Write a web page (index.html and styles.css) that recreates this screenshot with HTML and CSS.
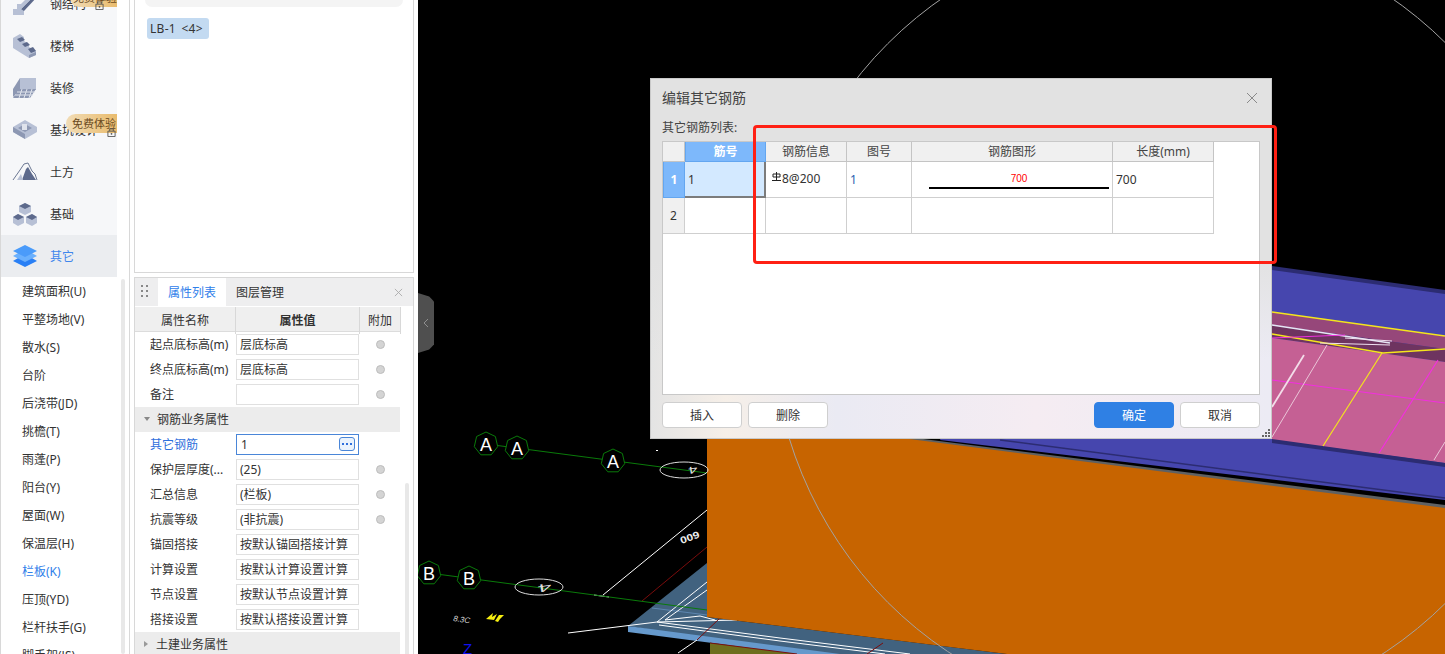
FILE: index.html
```html
<!DOCTYPE html>
<html lang="zh-CN">
<head>
<meta charset="utf-8">
<title>编辑其它钢筋</title>
<link rel="stylesheet" href="styles.css">
</head>
<body>
<div class="app">
  <aside class="sidebar">
    <div class="side-inner">
      <nav class="cats">
        <a class="cat">
          <svg class="cat-icon" viewBox="0 0 26 24"><polygon class="l" points="1,17 12,17 12,23 1,23"/><polygon class="l" points="5,12 9,12 9,18 5,18"/><polygon class="d" points="9,17 25,1 25,5 12,19"/><polygon class="l" points="9,12 20,1 25,1 9,17"/></svg>
          <span>钢结构</span>
          <em class="badge badge-top">免费体验</em>
          <svg class="lock lock-top" viewBox="0 0 10 10"><path d="M1 3.500h8v6H1zM3 3.500V1h4v2.500" fill="none" stroke="#555" stroke-width="1"/><circle cx="5" cy="6.500" r="1" fill="#555"/></svg>
        </a>
        <a class="cat">
          <svg class="cat-icon" viewBox="0 0 26 24"><polygon class="l" points="1,4 8,0 12,3 12,7 17,10 17,13 24,17 24,21 17,24 1,14"/><polygon class="d" points="5,5 10,3 13,6 8,8"/><polygon class="d" points="10,10 15,8 18,11 13,13"/><polygon class="d" points="16,15 21,13 24,17 19,19"/><polygon class="m" points="17,21 24,18 24,21 17,24"/></svg>
          <span>楼梯</span>
        </a>
        <a class="cat">
          <svg class="cat-icon" viewBox="0 0 26 24"><polygon class="l" points="8,2 24,2 24,14 8,14"/><polygon class="m" points="8,2 8,14 1,21 1,13"/><polygon class="m" points="7,13 24,13 18,22 1,22"/><path class="g" d="M5 16h18M3 19h18M10 13l-3 9M15 13l-3 9M20 13l-3 9"/></svg>
          <span>装修</span>
        </a>
        <a class="cat">
          <svg class="cat-icon" viewBox="0 0 26 24"><polygon class="l" points="13,2 25,9 25,14 13,21 1,14 1,9"/><polygon class="m" points="13,6 20,10 13,14 6,10"/><rect class="w" x="10" y="6" width="5" height="6"/><polygon class="m" points="1,9 13,16 13,21 1,14"/></svg>
          <span>基坑设计</span>
          <em class="badge">免费体验</em>
          <svg class="lock" viewBox="0 0 10 10"><path d="M1 3.500h8v6H1zM3 3.500V1h4v2.500" fill="none" stroke="#555" stroke-width="1"/><circle cx="5" cy="6.500" r="1" fill="#555"/></svg>
        </a>
        <a class="cat">
          <svg class="cat-icon" viewBox="0 0 26 24"><path d="M1 20 8 10l4-6 4-1 4 8 3 3 2 6" fill="none" stroke="#6c7893" stroke-width="1"/><polygon class="d" points="10,20 14,9 16,7 20,14 24,20"/><polygon class="l" points="5,20 9,14 11,20"/></svg>
          <span>土方</span>
        </a>
        <a class="cat">
          <svg class="cat-icon" viewBox="0 0 26 24"><polygon class="l" points="13,1 19,4 19,10 13,13 7,10 7,4"/><polygon class="d" points="7,4 13,1 19,4 13,7"/><polygon class="l" points="6,12 12,15 12,21 6,24 1,21 1,15"/><polygon class="d" points="1,15 6,12 12,15 6,18"/><polygon class="l" points="20,12 25,15 25,21 20,24 14,21 14,15"/><polygon class="d" points="14,15 20,12 25,15 20,18"/></svg>
          <span>基础</span>
        </a>
        <a class="cat is-active">
          <svg class="cat-icon" viewBox="0 0 26 24"><polygon fill="#2a80f5" points="13,10 25,17 13,23 1,17"/><polygon fill="#6ab0fd" points="13,5 25,12 13,18 1,12"/><polygon fill="#4a9bfa" points="13,1 25,7 13,13 1,7"/></svg>
          <span>其它</span>
        </a>
      </nav>
      <ul class="subs">
        <li>建筑面积(U)</li>
        <li>平整场地(V)</li>
        <li>散水(S)</li>
        <li>台阶</li>
        <li>后浇带(JD)</li>
        <li>挑檐(T)</li>
        <li>雨蓬(P)</li>
        <li>阳台(Y)</li>
        <li>屋面(W)</li>
        <li>保温层(H)</li>
        <li class="is-active">栏板(K)</li>
        <li>压顶(YD)</li>
        <li>栏杆扶手(G)</li>
        <li>脚手架(JS)</li>
      </ul>
    </div>
    <div class="side-track"><i class="side-thumb"></i></div>
  </aside>

  <section class="panels">
    <div class="list-panel">
      <div class="search-stub"></div>
      <span class="tag">LB-1 &lt;4&gt;</span>
    </div>
    <div class="prop-panel">
      <div class="tabs">
        <svg class="grip" viewBox="0 0 8 14"><g fill="#888"><rect width="2" height="2"/><rect x="5" width="2" height="2"/><rect y="5" width="2" height="2"/><rect x="5" y="5" width="2" height="2"/><rect y="10" width="2" height="2"/><rect x="5" y="10" width="2" height="2"/></g></svg>
        <span class="tab is-active">属性列表</span>
        <span class="tab">图层管理</span>
        <svg class="tab-close" viewBox="0 0 10 10"><path d="M1 1l8 8M9 1l-8 8" stroke="#aaa" stroke-width="1" fill="none"/></svg>
      </div>
      <div class="prop-head">
        <span>属性名称</span><span class="strong">属性值</span><span>附加</span>
      </div>
      <div class="prop-row"><label>起点底标高(m)</label><div class="val">层底标高</div><i class="dot"></i></div>
      <div class="prop-row"><label>终点底标高(m)</label><div class="val">层底标高</div><i class="dot"></i></div>
      <div class="prop-row"><label>备注</label><div class="val"></div><i class="dot"></i></div>
      <div class="prop-section"><i class="tri tri-down"></i>钢筋业务属性</div>
      <div class="prop-row is-active"><label>其它钢筋</label><div class="val">1<b class="more"><i></i><i></i><i></i></b></div></div>
      <div class="prop-row"><label>保护层厚度(...</label><div class="val">(25)</div><i class="dot"></i></div>
      <div class="prop-row"><label>汇总信息</label><div class="val">(栏板)</div><i class="dot"></i></div>
      <div class="prop-row"><label>抗震等级</label><div class="val">(非抗震)</div><i class="dot"></i></div>
      <div class="prop-row"><label>锚固搭接</label><div class="val">按默认锚固搭接计算</div></div>
      <div class="prop-row"><label>计算设置</label><div class="val">按默认计算设置计算</div></div>
      <div class="prop-row"><label>节点设置</label><div class="val">按默认节点设置计算</div></div>
      <div class="prop-row"><label>搭接设置</label><div class="val">按默认搭接设置计算</div></div>
      <div class="prop-section"><i class="tri tri-right"></i>土建业务属性</div>
      <i class="prop-scroll"></i>
    </div>
  </section>

  <main class="scene">
    <svg class="cad" viewBox="418 0 1027 654">
      <defs>
        <polygon id="hept" points="0,-12 9.4,-7.500 11.700,2.700 5.200,10.800 -5.200,10.800 -11.700,2.700 -9.400,-7.500" fill="#000" stroke="#0a7a0a" stroke-width="1"/>
      </defs>
      <!-- slab and beams -->
      <polygon fill="#4646ae" points="1272,268 1445,292 1445,500 940,440 1000,300"/>
      <polygon fill="#2c2c72" points="1272,266 1445,290 1445,294 1272,270"/>
      <polygon fill="#96477a" points="1272,312 1445,336 1445,349 1272,325"/>
      <polygon fill="#6e3460" points="1272,325 1445,349 1445,362 1272,338"/>
      <polygon fill="#c56094" points="1272,338 1445,362 1445,463 1272,440"/>
      <polygon fill="#2c2c72" points="1272,439 1445,463 1445,467 1272,443"/>
      <path d="M1000 440 1445 498" stroke="#2c2c72" stroke-width="1.500" fill="none"/>
      <polygon fill="#5e6163" points="860,431 1445,505 1445,510 860,437"/>
      <g fill="none" stroke-width="1">
        <path d="M1272 312 1445 336" stroke="#f4e51c" stroke-width="1.500"/>
        <path d="M1272 325 1390 343" stroke="#e6e6f5" stroke-width="1.500"/>
        <path d="M1272 334 1383 353 1445 349" stroke="#f4e51c" stroke-width="1.500"/>
        <path d="M1272 338 1345 335" stroke="#f030e0"/>
        <path d="M1345 338 1392 341M1320 343 1390 345" stroke="#f0e0f0"/>
        <path d="M1272 380 1445 403" stroke="#f22fe0" stroke-width="1.200"/>
        <path d="M1272 407 1304 355" stroke="#f3dde9" stroke-width="1.800"/>
        <path d="M1272 437 1327 345" stroke="#eac6d8"/>
        <path d="M1323 446 1382 353" stroke="#f4e51c" stroke-width="1.200"/>
        <path d="M1379 453 1438 360" stroke="#f22fe0" stroke-width="1.200"/>
        <path d="M1434 460 1445 442" stroke="#eac6d8"/>
      </g>
      <!-- platform -->
      <polygon fill="#6e6e1e" points="710,643 820,654 710,654"/>
      <polygon fill="#41627f" points="628,626 707,563 707,617 1007,654 797,654"/>
      <polygon fill="#6699cc" points="628,626 840,654 797,654 628,632"/>
      <path d="M710 643 797 654" stroke="#7a1010" stroke-width="1" fill="none"/>
      <path d="M652 608 707 615" stroke="#5d86b0" stroke-width="1" fill="none"/>
      <g fill="none" stroke="#fff" stroke-width="1">
        <path d="M568 633 657 622"/>
        <path d="M707 582 657 622M707 590 665 620"/>
        <path d="M657 622 737 620M665 620 700 616 715 620"/>
        <path d="M657 622 780 638 910 654M659 625 780 641 885 654"/>
        <path d="M678 653 697 640"/>
        <path d="M603 595 707 510"/>
        <path d="M594 595 609 597"/>
      </g>
      <g fill="none" stroke="#7a0c0c" stroke-width="1">
        <path d="M642 601 707 547"/>
        <path d="M697 640 720 618"/>
        <path d="M867 654 883 643"/>
      </g>
      <!-- orange wall -->
      <polygon fill="#c76400" points="707,413 1445,508 1445,654 1007,654 950,647 707,617"/>
      <!-- axes -->
      <g fill="none" stroke="#0a7a0a" stroke-width="1">
        <path d="M486 444 707 473"/>
        <path d="M429 573 707 610"/>
      </g>
      <use href="#hept" x="486" y="444"/>
      <use href="#hept" x="517" y="448"/>
      <use href="#hept" x="613" y="461"/>
      <use href="#hept" x="429" y="573"/>
      <use href="#hept" x="469" y="578"/>
      <g class="axis-label">
        <text x="486" y="451">A</text>
        <text x="517" y="455">A</text>
        <text x="613" y="468">A</text>
        <text x="429" y="580">B</text>
        <text x="469" y="585">B</text>
      </g>
      <ellipse cx="684" cy="470" rx="24" ry="8" fill="none" stroke="#ddd"/>
      <ellipse cx="539" cy="587" rx="24" ry="8" fill="none" stroke="#ddd"/>
      <text class="skew-num" transform="translate(697 466) rotate(172) scale(1.200 .7)">4</text>
      <text class="skew-num" transform="translate(551 583) rotate(172) scale(1.800 .8)">4</text>
      <text class="dim" transform="translate(698 531) rotate(160) scale(1 .8)">600</text>
      <text class="mini" transform="translate(453 621) rotate(8)">8.3C</text>
      <polygon fill="#f6ee10" points="486,619 493,613 492,617 497,614 494,620"/>
      <polygon fill="#f6ee10" points="495,621 499,615 504,615 500,619 498,622"/>
      <text class="z-label" x="463" y="654">Z</text>
      <rect x="656" y="450" width="2" height="1" fill="#fff"/>
      <!-- view circle -->
      <circle cx="1167" cy="323" r="395" fill="none" stroke="#a3a3a3" stroke-width="1"/>
    </svg>

    <button class="collapse" type="button">
      <svg viewBox="0 0 6 10"><path d="M5 1 1 5l4 4" fill="none" stroke="#8f8f8f" stroke-width="1"/></svg>
    </button>

    <div class="dialog">
      <header class="dialog-head">
        <h1>编辑其它钢筋</h1>
        <svg class="dialog-close" viewBox="0 0 12 12"><path d="M1 1l10 10M11 1 1 11" stroke="#8a8a8a" stroke-width="1" fill="none"/></svg>
      </header>
      <p class="dialog-label">其它钢筋列表:</p>
      <div class="grid-box">
        <table class="rebar">
          <colgroup><col class="c0"><col class="c1"><col class="c2"><col class="c3"><col class="c4"><col class="c5"></colgroup>
          <thead>
            <tr><th></th><th class="sel-head">筋号</th><th>钢筋信息</th><th>图号</th><th>钢筋图形</th><th>长度(mm)</th></tr>
          </thead>
          <tbody>
            <tr>
              <th class="sel-head row-no">1</th>
              <td class="sel-cell">1</td>
              <td class="info"><svg class="rebar-mark" viewBox="0 0 9 9"><path d="M1 2h7v3H1zM4.500 0v8M0 8.500h9" fill="none" stroke="#222" stroke-width="1"/></svg>8@200</td>
              <td class="blue">1</td>
              <td class="shape"><span class="shape-num">700</span><i class="shape-bar"></i></td>
              <td>700</td>
            </tr>
            <tr>
              <th class="row-no plain">2</th><td></td><td></td><td></td><td></td><td></td>
            </tr>
          </tbody>
        </table>
      </div>
      <footer class="dialog-foot">
        <button class="btn" type="button">插入</button>
        <button class="btn" type="button">删除</button>
        <span class="foot-gap"></span>
        <button class="btn btn-primary" type="button">确定</button>
        <button class="btn" type="button">取消</button>
      </footer>
      <svg class="resize" viewBox="0 0 9 9"><g fill="#666"><rect x="7" y="1" width="2" height="2"/><rect x="4" y="4" width="2" height="2"/><rect x="7" y="4" width="2" height="2"/><rect x="1" y="7" width="2" height="2"/><rect x="4" y="7" width="2" height="2"/><rect x="7" y="7" width="2" height="2"/></g></svg>
    </div>
    <div class="annotation"></div>
  </main>
</div>
</body>
</html>
```

FILE: styles.css
```css
* { box-sizing: border-box; }
html, body { margin: 0; height: 100%; overflow: hidden; background: #fff; }
body {
  font-family: "Noto Sans", "Noto Sans CJK SC", sans-serif;
  font-size: 12px;
  color: #333;
}
.app { display: flex; width: 1445px; height: 654px; overflow: hidden; }

/* left category rail */
.sidebar {
  flex: 0 0 130px;
  height: 654px;
  display: flex;
  border-left: 1px solid #d8d8d8;
  border-right: 1px solid #d8d8d8;
  overflow: hidden;
}
.side-inner { flex: 0 0 116px; margin-top: -17px; }
.cats { background: #f6f7f9; }
.cat {
  position: relative;
  display: flex;
  align-items: center;
  height: 42px;
  padding-left: 11px;
  overflow: hidden;
}
.cat span { margin-left: 12px; color: #333; }
.cat.is-active { background: #ebedf0; }
.cat.is-active span { color: #3f86ec; }
.cat-icon { flex: 0 0 26px; width: 26px; height: 24px; }
.cat-icon .l { fill: #b7c0d5; }
.cat-icon .m { fill: #8d98b3; }
.cat-icon .d { fill: #5d6a8c; }
.cat-icon .w { fill: #dfe3ec; }
.cat-icon .g { stroke: #dfe3ec; stroke-width: 1; fill: none; }
.badge {
  position: absolute;
  left: 65px;
  top: 5px;
  width: 52px;
  height: 19px;
  padding-left: 6px;
  border-radius: 10px 0 0 10px;
  background: linear-gradient(90deg, #f1dcb6, #e9bb6c);
  color: #6a4a1e;
  font-size: 11px;
  font-style: normal;
  line-height: 19px;
  white-space: nowrap;
}
.badge-top { left: 69px; width: 48px; padding-left: 3px; }
.lock { position: absolute; left: 106px; top: 19px; width: 9px; height: 9px; }
.lock-top { left: 94px; top: 18px; }
.subs { list-style: none; margin: 1px 0 0; padding: 0; background: #fff; }
.subs li { height: 28px; padding-left: 21px; line-height: 28px; white-space: nowrap; color: #333; }
.subs li.is-active { color: #2f80ea; }
.side-track { flex: 0 0 12px; padding: 279px 0 0 4px; }
.side-thumb { display: block; width: 4px; height: 375px; background: #e8e8e8; border-radius: 2px; }

/* middle panels */
.panels { flex: 0 0 288px; padding: 0 4px; display: flex; flex-direction: column; gap: 4px; }
.list-panel {
  flex: 0 0 273px;
  border: 1px solid #d8d8d8;
  border-top: 0;
  background: #fff;
  padding: 0 10px;
}
.search-stub { height: 7px; background: #f4f4f4; border-radius: 0 0 12px 12px; }
.tag {
  display: inline-block;
  width: 62px;
  margin: 11px 0 0 2px;
  height: 21px;
  padding-left: 3px;
  line-height: 21px;
  background: #c3daf1;
  border-radius: 3px;
  letter-spacing: .3px;
  word-spacing: 2px;
  white-space: nowrap;
}
.prop-panel {
  position: relative;
  flex: 1;
  min-height: 0;
  border: 1px solid #d8d8d8;
  border-bottom: 0;
  overflow: hidden;
}
.tabs { display: flex; align-items: center; height: 28px; background: #eeeeef; position: relative; }
.grip { width: 8px; height: 14px; margin: 0 0 0 6px; }
.tab { height: 28px; line-height: 30px; padding: 0 10px; }
.tab.is-active { background: #fff; color: #2f80ea; margin-left: 9px; width: 68px; }
.tab-close { position: absolute; right: 10px; top: 10px; width: 9px; height: 9px; }
.prop-head {
  display: grid;
  grid-template-columns: 101px 124px 41px;
  width: 266px;
  height: 25px;
  margin-top: 1px;
  background: #efefef;
  border-bottom: 1px solid #dcdcdc;
  line-height: 27px;
  text-align: center;
}
.prop-head span { border-right: 1px solid #d8d8d8; }
.prop-head .strong { font-weight: 700; }
.prop-row {
  display: grid;
  grid-template-columns: 101px 124px 41px;
  align-items: center;
  width: 266px;
  height: 25px;
}
.prop-row label { padding: 0 0 2px 15px; white-space: nowrap; overflow: hidden; }
.val {
  position: relative;
  height: 21px;
  margin-right: 1px;
  padding-left: 3px;
  border: 1px solid #e0e0e0;
  background: #fff;
  line-height: 19px;
  white-space: nowrap;
}
.dot {
  justify-self: center;
  width: 9px;
  height: 9px;
  border-radius: 50%;
  background: #d4d4d4;
  border: 1px solid #bdbdbd;
  margin-left: -1px;
}
.prop-row.is-active label { color: #2f6fdc; }
.prop-row.is-active .val { border-color: #4a86d8; padding-left: 4px; }
.more {
  position: absolute;
  right: 3px;
  top: 2px;
  display: flex;
  align-items: center;
  justify-content: center;
  gap: 2px;
  width: 16px;
  height: 14px;
  border: 1px solid #4a86d8;
  border-radius: 3px;
  background: #eaf3fd;
}
.more i { width: 2px; height: 2px; background: #2f6fdc; }
.prop-section {
  display: flex;
  align-items: center;
  width: 265px;
  height: 25px;
  background: #ececec;
  padding: 0 0 2px 9px;
}
.tri { width: 0; height: 0; margin-right: 7px; border-style: solid; border-color: transparent; }
.tri-down { border-width: 4px 3px 0; border-top-color: #888; }
.tri-right { border-width: 3px 0 3px 4px; border-left-color: #999; margin-right: 8px; }
.prop-scroll {
  position: absolute;
  left: 270px;
  top: 205px;
  width: 4px;
  height: 180px;
  background: #e8e8e8;
  border-radius: 2px;
}

/* CAD scene */
.scene { position: relative; flex: 1; height: 654px; background: #000; overflow: hidden; }
.cad { position: absolute; left: 0; top: 0; width: 1027px; height: 654px; }
.axis-label text { font-family: "Liberation Sans", sans-serif; font-size: 18px; fill: #fff; text-anchor: middle; }
.skew-num { font-family: "Liberation Sans", sans-serif; font-size: 14px; fill: #ddd; }
.dim { font-family: "Liberation Sans", sans-serif; font-size: 12px; font-weight: 700; fill: #eee; }
.mini { font-family: "Liberation Sans", sans-serif; font-size: 8px; font-style: italic; fill: #ddd; }
.z-label { font-family: "Liberation Sans", sans-serif; font-size: 15px; fill: #1010f0; }
.collapse {
  position: absolute;
  left: 0;
  top: 293px;
  width: 16px;
  height: 60px;
  padding: 0;
  border: 0;
  background: #4f4f4f;
  border-radius: 0 6px 6px 0;
  clip-path: polygon(0 0, 70% 6%, 100% 14%, 100% 86%, 70% 94%, 0 100%);
  display: flex;
  align-items: center;
  justify-content: center;
}
.collapse svg { width: 6px; height: 10px; }

/* dialog */
.dialog {
  position: absolute;
  left: 232px;
  top: 78px;
  width: 622px;
  height: 361px;
  padding: 0 11px;
  display: flex;
  flex-direction: column;
  border: 1px solid #c9c9c9;
  background:
    linear-gradient(180deg, #e2e2e2 0%, #e2e2e2 50%, rgba(226,226,226,0) 78%),
    linear-gradient(90deg, #e4e4e4 0%, #f6efe8 12%, #eaeaf3 30%, #f5ecf2 62%, #ecebf4 100%);
}
.dialog-head { flex: 0 0 36px; display: flex; align-items: center; justify-content: space-between; }
.dialog-head h1 { margin: 0; font-size: 14px; font-weight: 400; color: #444; }
.dialog-close { width: 12px; height: 12px; margin-right: 2px; margin-top: 2px; }
.dialog-label { margin: 0; flex: 0 0 26px; padding-top: 5px; line-height: 16px; color: #444; }
.grid-box {
  height: 254px;
  border: 1px solid #c8c8c8;
  background: #fff;
}
.rebar { border-collapse: separate; border-spacing: 0; table-layout: fixed; width: 551px; }
.c0 { width: 22px; } .c1 { width: 81px; } .c2 { width: 81px; } .c3 { width: 65px; } .c4 { width: 201px; } .c5 { width: 101px; }
.rebar th, .rebar td { padding: 0; border-right: 1px solid #cfcfcf; border-bottom: 1px solid #cfcfcf; font-weight: 400; }
.rebar thead th { height: 20px; background: #f0f0f0; text-align: center; line-height: 19px; color: #444; border-color: #c4c4c4; }
.rebar tbody tr { height: 36px; }
.rebar td { padding-left: 3px; vertical-align: middle; color: #333; }
.rebar thead .sel-head, .rebar .sel-head { background: #7db8fb; color: #fff; font-weight: 700; border: 1px solid #63a6f0; border-width: 0 1px 1px 1px; }
.row-no { text-align: center; }
.rebar .plain { background: #f0f0f0; }
.rebar .sel-cell {
  background: #d3e9ff;
  border-right: 2px solid #7c7c7c;
  border-bottom: 2px solid #7c7c7c;
}
.rebar .info { padding-left: 6px; padding-bottom: 2px; }
.rebar-mark { width: 9px; height: 9px; margin-right: 1px; vertical-align: 2px; }
.rebar .blue { color: #2a5fb0; }
.rebar .shape { padding: 0 3px 0 17px; }
.shape-num { display: block; height: 13px; margin-top: 2px; line-height: 13px; text-align: center; color: #f00; font-size: 10px; font-family: "Liberation Sans", sans-serif; }
.shape-bar { display: block; height: 2px; margin-top: 2px; background: #000; }
.dialog-foot { display: flex; gap: 6px; padding-top: 7px; }
.foot-gap { flex: 1; }
.btn {
  width: 80px;
  height: 26px;
  padding: 0;
  border: 1px solid #cfcfcf;
  border-radius: 4px;
  background: #fff;
  font: inherit;
  color: #333;
}
.btn-primary { background: #2f80e4; border-color: #2f80e4; color: #fff; }
.resize { position: absolute; right: 1px; bottom: 1px; width: 9px; height: 9px; }
.annotation {
  position: absolute;
  left: 335px;
  top: 125px;
  width: 524px;
  height: 139px;
  border: 3px solid #ff2014;
  border-radius: 4px;
  pointer-events: none;
}
```
